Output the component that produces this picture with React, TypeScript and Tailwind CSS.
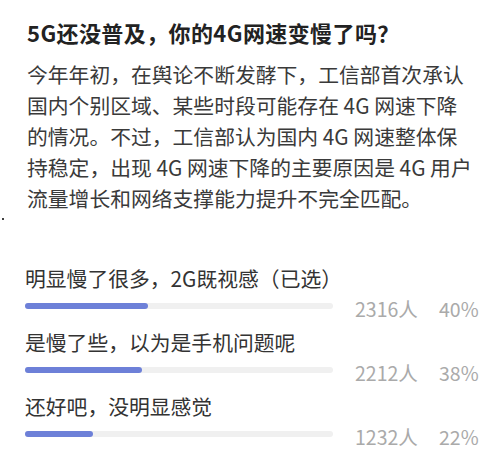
const font = { fontFamily: '"Noto Sans CJK SC", "Noto Sans", sans-serif' }

const bodyLines = [
  "今年年初，在舆论不断发酵下，工信部首次承认",
  "国内个别区域、某些时段可能存在 4G 网速下降",
  "的情况。不过，工信部认为国内 4G 网速整体保",
  "持稳定，出现 4G 网速下降的主要原因是 4G 用户",
  "流量增长和网络支撑能力提升不完全匹配。",
]

const options = [
  { label: "明显慢了很多，2G既视感（已选）", count: "2316人", pct: 40 },
  { label: "是慢了些，以为是手机问题呢", count: "2212人", pct: 38 },
  { label: "还好吧，没明显感觉", count: "1232人", pct: 22 },
]

export default function App() {
  return (
    <div className="relative w-[500px] h-[456px] bg-white overflow-hidden" style={font}>
      <div className="pl-[27px] pt-[17px]">
        <h1 className="text-[22px] leading-[30px] font-bold tracking-[0.4px] text-[#222] whitespace-nowrap">
          5G还没普及，你的4G网速变慢了吗？
        </h1>
        <div className="mt-[12px] text-[20.8px] leading-[31px] text-[#3a3a3a] whitespace-nowrap">
          {bodyLines.map((l) => (
            <div key={l}>{l}</div>
          ))}
        </div>
      </div>

      <div className="h-[9px] flex items-center pl-[2px]">
        <div className="w-[2px] h-[2px] rounded-full bg-black" />
      </div>

      <div className="pl-[25px] mt-[40px] flex flex-col gap-[8px]">
        {options.map((o) => (
          <div key={o.label}>
            <div className="text-[20.8px] leading-[30px] text-[#333] whitespace-nowrap">{o.label}</div>
            <div className="flex items-center h-[26px]">
              <div className="w-[308px] h-[6px] rounded-full bg-[#f0f0f0]">
                <div className="h-full rounded-full bg-[#6d80d8]" style={{ width: `${o.pct}%` }} />
              </div>
              <div className="ml-[22px] mt-[6px] flex text-[19.5px] leading-[26px] text-[#aaa]">
                <span className="w-[84px]">{o.count}</span>
                <span>{o.pct}%</span>
              </div>
            </div>
          </div>
        ))}
      </div>
    </div>
  )
}
